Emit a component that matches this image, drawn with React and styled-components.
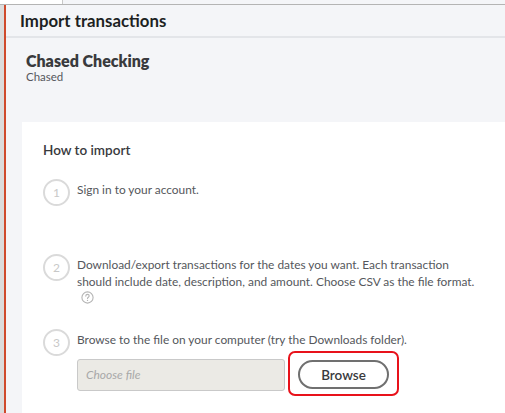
import styled, { createGlobalStyle } from "styled-components";

const GlobalStyle = createGlobalStyle`
  html, body {
    margin: 0;
    padding: 0;
    background: #f4f5f8;
  }
  body {
    font-family: Lato, "Open Sans", sans-serif;
    color: #393a3d;
  }
`;

const Page = styled.div`
  display: flex;
  width: 505px;
  height: 413px;
  overflow: hidden;
`;

const Gutter = styled.div`
  width: 4px;
  flex: none;
  background: #dcdcdc;
`;

const Accent = styled.div`
  width: 2px;
  flex: none;
  background: #cf4a2c;
`;

const Main = styled.div`
  flex: 1;
  display: flex;
  flex-direction: column;
  background: #f4f5f8;
  min-width: 0;
`;

const TopStrip = styled.div`
  height: 4px;
  flex: none;
  display: flex;
  background: #f4f5f8;
  border-bottom: 1px solid #b4b4b4;
  margin-left: -6px;
`;

const Tab = styled.div`
  width: 62px;
  background: #ffffff;
  border-right: 1px solid #c8c8c8;
`;

const Header = styled.div`
  height: 31px;
  flex: none;
  display: flex;
  align-items: center;
  padding-left: 14px;
  border-bottom: 2px solid #e3e5e9;
  font-size: 16.8px;
  font-weight: 700;
  color: #1d1f22;
`;

const Account = styled.div`
  padding: 13px 0 0 20px;
  height: 71px;
  flex: none;
`;

const AccountName = styled.div`
  font-size: 16px;
  font-weight: 800;
  color: #393a3d;
  line-height: 19px;
`;

const Bank = styled.div`
  font-size: 11.5px;
  color: #55575c;
  line-height: 14px;
`;

const Card = styled.div`
  flex: 1;
  margin-left: 16px;
  background: #ffffff;
  padding: 20px 0 0 21px;
`;

const Title = styled.div`
  font-size: 13.5px;
  font-weight: 600;
  color: #393a3d;
  line-height: 16px;
  margin-bottom: 21px;
`;

const Step = styled.div`
  display: flex;
  gap: 7px;
  min-height: ${(p) => p.$height}px;
`;

const Circle = styled.div`
  width: 23px;
  height: 23px;
  flex: none;
  border: 2px solid #dadada;
  border-radius: 50%;
  display: flex;
  align-items: center;
  justify-content: center;
  color: #c8c8c8;
  font-size: 12px;
`;

const StepBody = styled.div`
  padding-top: 2px;
  font-size: 11.9px;
  line-height: 17px;
  color: #55575c;
`;

const Help = styled.svg`
  display: block;
  margin: 1px 0 0 4px;
`;

const FileRow = styled.div`
  display: flex;
  align-items: center;
  gap: 3px;
  margin-top: 5px;
`;

const FileInput = styled.div`
  width: 198px;
  height: 30px;
  border: 1px solid #c9c9c9;
  border-radius: 3px;
  background: #ebeae5;
  display: flex;
  align-items: center;
  padding-left: 8px;
  font-size: 12px;
  font-style: italic;
  color: #a8a8a8;
`;

const Highlight = styled.div`
  padding: 7px 8px 5px;
  border: 2.5px solid #e8121b;
  border-radius: 7px;
  margin-top: -2px;
`;

const BrowseButton = styled.button`
  width: 91px;
  height: 29px;
  border: 2px solid #707070;
  border-radius: 15px;
  background: #ffffff;
  font-family: Lato, "Open Sans", sans-serif;
  font-size: 13.5px;
  font-weight: 600;
  color: #393a3d;
  display: block;
`;

const HelpIcon = () => (
  <Help width="13" height="13" viewBox="0 0 13 13">
    <circle cx="6.5" cy="6.5" r="5.6" fill="none" stroke="#b5b5b5" strokeWidth="1.1" />
    <path
      d="M4.8 5.1a1.7 1.7 0 0 1 3.4 0c0 1.1-1.7 1.2-1.7 2.4"
      fill="none"
      stroke="#b5b5b5"
      strokeWidth="1.1"
      strokeLinecap="round"
    />
    <circle cx="6.5" cy="9.4" r="0.7" fill="#b5b5b5" />
  </Help>
);

export default function App() {
  return (
    <>
      <GlobalStyle />
      <Page>
        <Gutter />
        <Accent />
        <Main>
          <TopStrip>
            <Tab />
          </TopStrip>
          <Header>Import transactions</Header>
          <Account>
            <AccountName>Chased Checking</AccountName>
            <Bank>Chased</Bank>
          </Account>
          <Card>
            <Title>How to import</Title>
            <Step $height={75}>
              <Circle>1</Circle>
              <StepBody>Sign in to your account.</StepBody>
            </Step>
            <Step $height={75}>
              <Circle>2</Circle>
              <StepBody>
                Download/export transactions for the dates you want. Each transaction
                <br />
                should include date, description, and amount. Choose CSV as the file format.
                <HelpIcon />
              </StepBody>
            </Step>
            <Step $height={60}>
              <Circle>3</Circle>
              <StepBody>
                Browse to the file on your computer (try the Downloads folder).
                <FileRow>
                  <FileInput>Choose file</FileInput>
                  <Highlight>
                    <BrowseButton>Browse</BrowseButton>
                  </Highlight>
                </FileRow>
              </StepBody>
            </Step>
          </Card>
        </Main>
      </Page>
    </>
  );
}
